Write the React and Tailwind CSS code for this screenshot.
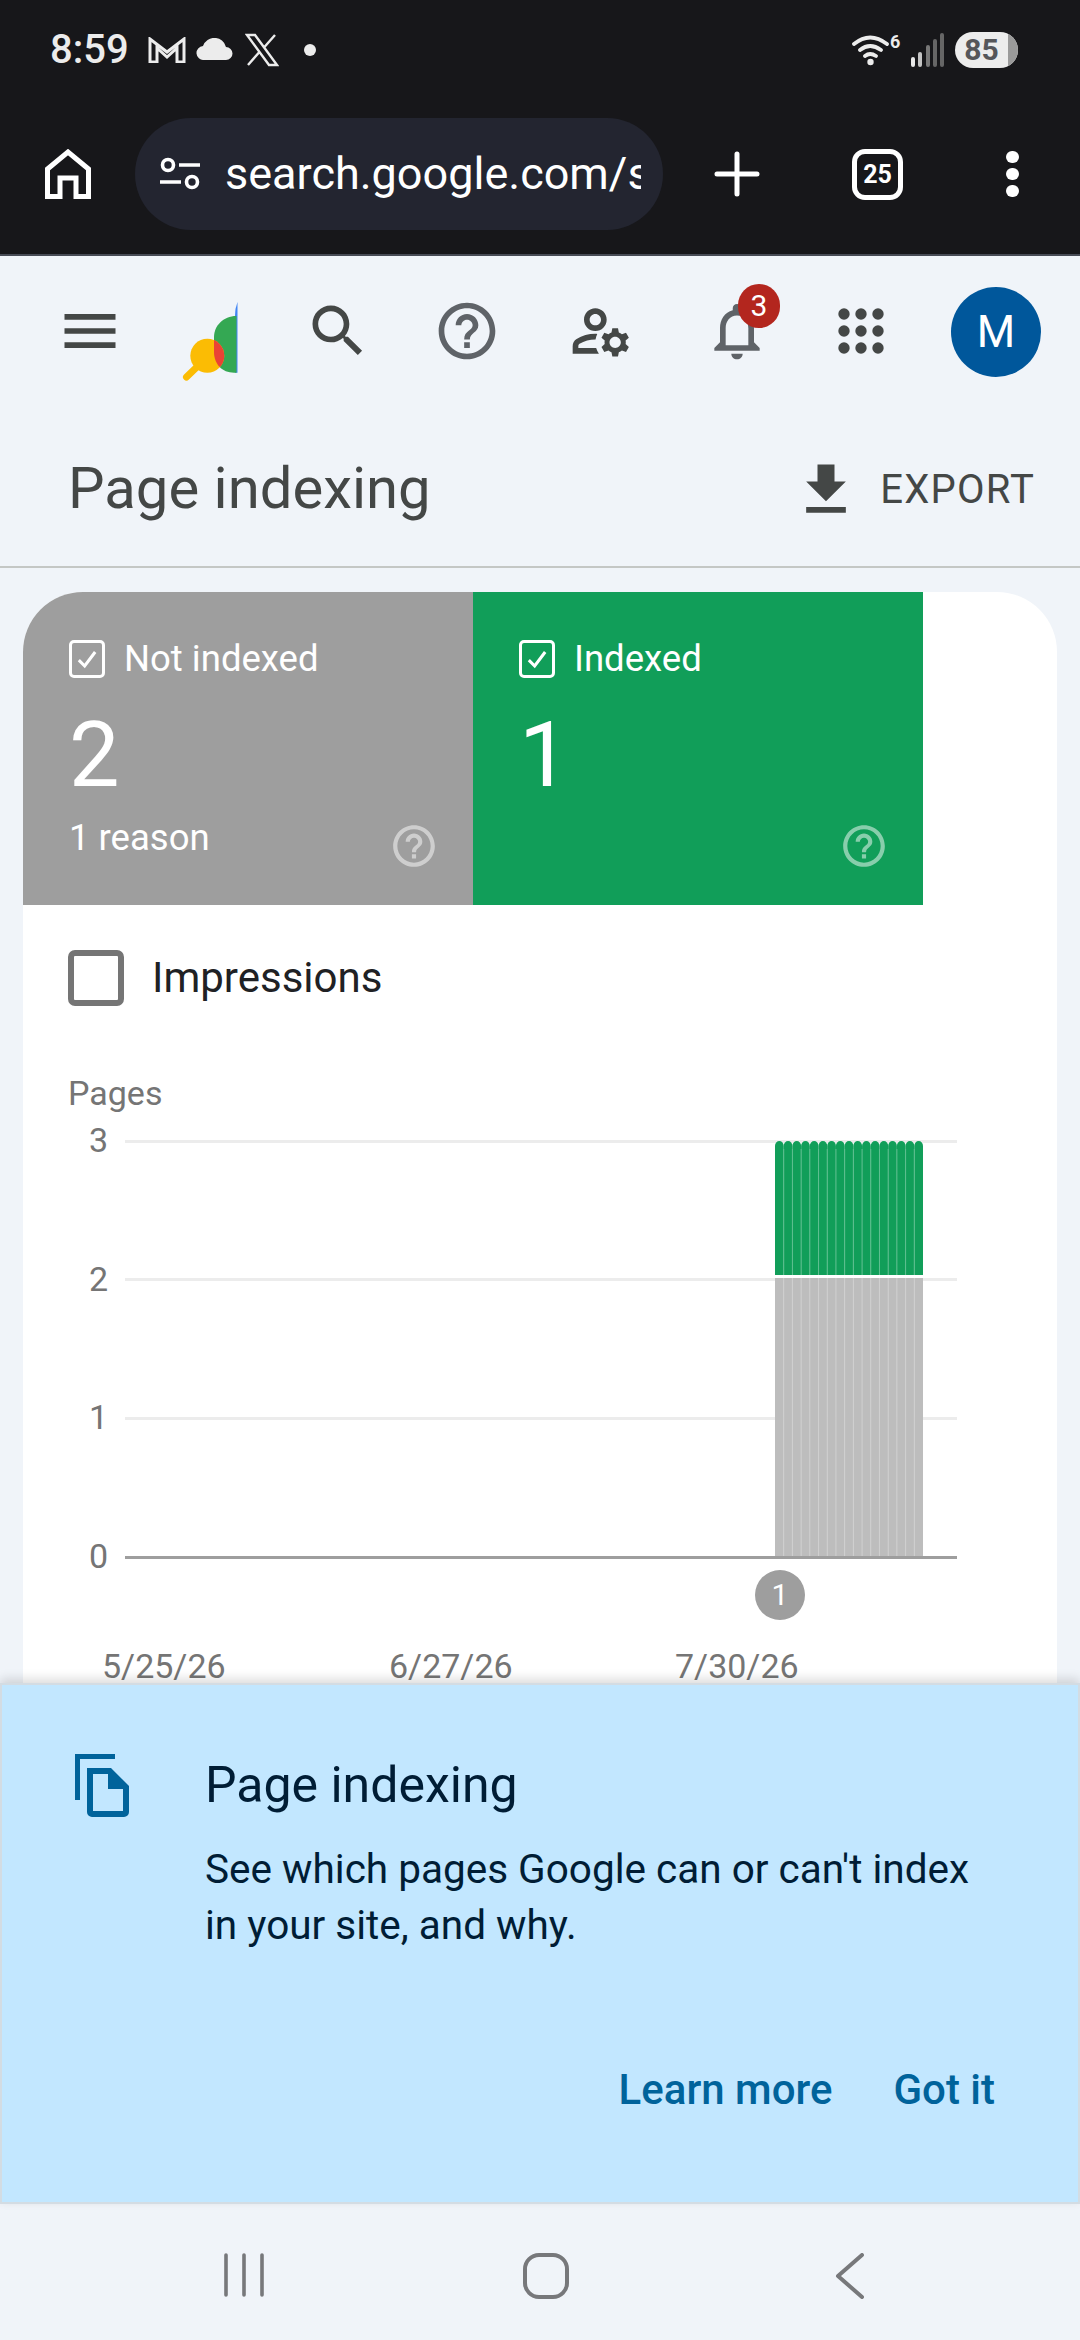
import React from "react";

const paths = {
  menu: "M3 18h18v-2H3v2zm0-5h18v-2H3v2zm0-7v2h18V6H3z",
  search:
    "M15.5 14h-.79l-.28-.27C15.41 12.59 16 11.11 16 9.5 16 5.91 13.09 3 9.5 3S3 5.91 3 9.5 5.91 16 9.5 16c1.61 0 3.09-.59 4.23-1.57l.27.28v.79l5 4.99L20.49 19l-4.99-5zm-6 0C7.01 14 5 11.99 5 9.5S7.01 5 9.5 5 14 7.01 14 9.5 11.99 14 9.5 14z",
  help: "M11 18h2v-2h-2v2zm1-16C6.48 2 2 6.48 2 12s4.48 10 10 10 10-4.48 10-10S17.52 2 12 2zm0 18c-4.41 0-8-3.59-8-8s3.59-8 8-8 8 3.59 8 8-3.59 8-8 8zm0-14c-2.21 0-4 1.79-4 4h2c0-1.1.9-2 2-2s2 .9 2 2c0 2-3 1.75-3 5h2c0-2.25 3-2.5 3-5 0-2.21-1.79-4-4-4z",
  accounts:
    "M4 18v-.65c0-.34.16-.66.41-.81C6.1 15.53 8.03 15 10 15c.03 0 .05 0 .08.01.1-.7.3-1.37.59-1.98-.22-.02-.44-.03-.67-.03-2.42 0-4.68.67-6.61 1.82-.88.52-1.39 1.5-1.39 2.53V20h9.26c-.42-.6-.75-1.28-.97-2H4zM10 12c2.21 0 4-1.79 4-4s-1.79-4-4-4-4 1.79-4 4 1.79 4 4 4zm0-6c1.1 0 2 .9 2 2s-.9 2-2 2-2-.9-2-2 .9-2 2-2zM20.75 16c0-.22-.03-.42-.06-.63l1.14-1.01-1-1.73-1.45.49c-.32-.27-.68-.48-1.08-.63L18 11h-2l-.3 1.49c-.4.15-.76.36-1.08.63l-1.45-.49-1 1.73 1.14 1.01c-.03.21-.06.41-.06.63s.03.42.06.63l-1.14 1.01 1 1.73 1.45-.49c.32.27.68.48 1.08.63L16 21h2l.3-1.49c.4-.15.76-.36 1.08-.63l1.45.49 1-1.73-1.14-1.01c.03-.21.06-.41.06-.63zM17 18c-1.1 0-2-.9-2-2s.9-2 2-2 2 .9 2 2-.9 2-2 2z",
  bell: "M12 22c1.1 0 2-.9 2-2h-4c0 1.1.89 2 2 2zm6-6v-5c0-3.07-1.64-5.64-4.5-6.32V4c0-.83-.67-1.5-1.5-1.5s-1.5.67-1.5 1.5v.68C7.63 5.36 6 7.92 6 11v5l-2 2v1h16v-1l-2-2zm-2 1H8v-6c0-2.48 1.51-4.5 4-4.5s4 2.02 4 4.5v6z",
  download: "M19 9h-4V3H9v6H5l7 7 7-7zM5 18v2h14v-2H5z",
};

function Icon({ name, className }) {
  return (
    <svg viewBox="0 0 24 24" className={className} fill="currentColor">
      <path d={paths[name]} />
    </svg>
  );
}

function AppsIcon({ className }) {
  const spots = [6, 12, 18];
  return (
    <svg viewBox="0 0 24 24" className={className} fill="currentColor">
      {spots.map((y) =>
        spots.map((x) => <circle key={`${x}-${y}`} cx={x} cy={y} r="2" />)
      )}
    </svg>
  );
}

const greenShape = "M56.5 16 V72.7 H54 C42 72.7 34 64 34 52 V37 C34 26 43 16 56.5 16 Z";

function Logo() {
  return (
    <svg viewBox="0 0 60 84" className="ml-[56px] w-[60px] h-[84px] mt-[11px] shrink-0">
      <defs>
        <clipPath id="logo-green">
          <path d={greenShape} />
        </clipPath>
      </defs>
      <path d="M57.5 2 Q55 8 55 16 V72.7 H57.5 Z" fill="#4285f4" />
      <path d={greenShape} fill="#34a853" />
      <path d="M6.5 77 L20 64" stroke="#fbbc04" strokeWidth="7" strokeLinecap="round" />
      <circle cx="27.3" cy="55.7" r="17" fill="#fbbc04" />
      <circle cx="27.3" cy="55.7" r="17" fill="#ea4335" clipPath="url(#logo-green)" />
    </svg>
  );
}

function StatusBar() {
  return (
    <div className="h-[100px] flex items-center justify-between pl-[50px] pr-[62px] text-[#ececec]">
      <div className="flex items-center">
        <span className="text-[40px] leading-none font-medium w-[98px]">8:59</span>
        <svg viewBox="0 0 38 26" className="w-[38px] h-[26px]" fill="none" stroke="currentColor" strokeWidth="3">
          <path d="M2 25 V2 L19 15 L36 2 V25 H29 V11 L19 20 L9 11 V25 Z" />
        </svg>
        <svg viewBox="0 0 38 22" className="w-[38px] h-[22px] ml-[10px] -mt-[2px]" fill="currentColor">
          <path d="M8 22 a7 7 0 0 1-1-14 a12 12 0 0 1 23 1 a6.5 6.5 0 0 1 0 13 Z" />
        </svg>
        <svg viewBox="0 0 34 34" className="w-[34px] h-[34px] ml-[11px]" fill="none" stroke="currentColor" strokeWidth="2.4">
          <path d="M2 2 H10 L32 32 H24 Z M30 2 L19 14.5 M14 19.5 L3 32" />
        </svg>
        <div className="w-[12px] h-[12px] rounded-full bg-[#ececec] ml-[25px]" />
      </div>
      <div className="flex items-center">
        <svg viewBox="0 0 50 32" className="w-[50px] h-[32px]" fill="none" stroke="currentColor" strokeLinecap="round">
          <path d="M2 10 Q18 -3 35 10 M8 16 Q18 8 29 16 M13 22 Q18 18 24 22" strokeWidth="3.8" />
          <circle cx="18.5" cy="28" r="3.2" fill="currentColor" stroke="none" />
          <text x="38" y="14" fontSize="18" fontWeight="700" fill="currentColor" stroke="none" fontFamily="Roboto, sans-serif">6</text>
        </svg>
        <svg viewBox="0 0 34 34" className="w-[34px] h-[34px] ml-[9px]" fill="none" strokeWidth="4" strokeLinecap="round">
          <path d="M2 32 V26" stroke="#e8e8e8" />
          <path d="M9 32 V21" stroke="#c4c4c4" />
          <path d="M17 32 V14" stroke="#777" />
          <path d="M24 32 V8" stroke="#666" />
          <path d="M31 32 V2" stroke="#666" />
        </svg>
        <div className="ml-[10px] w-[63px] h-[36px] rounded-full overflow-hidden bg-[#ececec] flex">
          <div className="w-[53px] flex items-center justify-center text-[#55565a] text-[30px] leading-none font-bold">
            85
          </div>
          <div className="w-[10px] bg-[#9a9a9a]" />
        </div>
      </div>
    </div>
  );
}

function BrowserBar() {
  return (
    <div className="mt-[18px] h-[112px] flex items-center text-white">
      <svg viewBox="0 0 46 50" className="ml-[45px] w-[46px] h-[50px]" fill="none" stroke="currentColor" strokeWidth="5">
        <path d="M2.5 47.5 V20 L23 3 L43.5 20 V47.5 H31 V29 H15 V47.5 Z" />
      </svg>
      <div className="ml-[44px] w-[528px] h-[112px] rounded-[56px] bg-[#232530] flex items-center pl-[24px]">
        <svg viewBox="0 0 42 34" className="w-[42px] h-[34px] shrink-0" fill="none" stroke="currentColor" strokeWidth="3.6">
          <circle cx="9" cy="8" r="5.5" />
          <path d="M20 8 H41 M1 25 H22" />
          <circle cx="33" cy="25" r="5.5" />
        </svg>
        <div className="ml-[24px] w-[416px] overflow-hidden whitespace-nowrap text-[45px] leading-[60px]">
          search.google.com/search
        </div>
      </div>
      <svg viewBox="0 0 46 46" className="ml-[51px] w-[46px] h-[46px]" stroke="currentColor" strokeWidth="5" strokeLinecap="round">
        <path d="M23 3 V43 M3 23 H43" />
      </svg>
      <div className="ml-[92px] w-[51px] h-[51px] border-[5px] border-white rounded-[13px] flex items-center justify-center text-[25px] leading-none font-bold">
        25
      </div>
      <div className="ml-[103px] flex flex-col gap-[5px]">
        <div className="w-[13px] h-[12px] rounded-full bg-white" />
        <div className="w-[13px] h-[12px] rounded-full bg-white" />
        <div className="w-[13px] h-[12px] rounded-full bg-white" />
      </div>
    </div>
  );
}

function Toolbar() {
  return (
    <div className="h-[120px] shrink-0 pt-[9px] flex items-start pl-[56px] text-[#444746]">
      <Icon name="menu" className="w-[68px] h-[68px] mt-[8px] shrink-0" />
      <Logo />
      <Icon name="search" className="ml-[64px] w-[68px] h-[68px] mt-[8px] shrink-0" />
      <Icon name="help" className="ml-[61px] w-[68px] h-[68px] mt-[8px] shrink-0 text-[#5f6368]" />
      <Icon name="accounts" className="ml-[66px] w-[68px] h-[68px] mt-[8px] shrink-0" />
      <div className="relative ml-[68px] w-[68px] h-[68px] mt-[8px] shrink-0 text-[#5f6368]">
        <Icon name="bell" className="w-[68px] h-[68px]" />
        <div className="absolute -top-[13px] left-[35px] w-[42px] h-[44px] rounded-full bg-[#b3261e] text-white text-[30px] leading-[44px] text-center">
          3
        </div>
      </div>
      <AppsIcon className="ml-[56px] w-[68px] h-[68px] mt-[8px] shrink-0" />
      <div className="ml-[56px] w-[90px] h-[90px] -mt-[2px] rounded-full bg-[#00579b] text-white text-[44px] leading-[90px] text-center shrink-0">
        M
      </div>
    </div>
  );
}

function TitleRow() {
  return (
    <div className="h-[168px] shrink-0 border-b-[2px] border-[#c4c7c5] flex items-center justify-between pl-[68px] pr-[45px] pt-[10px] text-[#444746]">
      <div className="text-[58px] leading-[70px]">Page indexing</div>
      <div className="flex items-center mt-[3px]">
        <Icon name="download" className="w-[68px] h-[68px]" />
        <div className="ml-[20px] text-[40px] leading-[50px] tracking-[1.2px]">EXPORT</div>
      </div>
    </div>
  );
}

function Tile({ label, value, note, bg }) {
  return (
    <div className={`w-[450px] h-[313px] ${bg} text-white pl-[46px] pr-[34px] pt-[47px]`}>
      <div className="flex items-center h-[40px]">
        <div className="w-[36px] h-[38px] border-[3px] border-white rounded-[5px] flex items-center justify-center">
          <svg viewBox="0 0 24 24" className="w-[28px] h-[28px]" fill="none" stroke="currentColor" strokeWidth="2.6">
            <path d="M5 13 L10 18 L19 6" />
          </svg>
        </div>
        <div className="ml-[19px] text-[36.5px] leading-[40px]">{label}</div>
      </div>
      <div className="mt-[32px] text-[90px] leading-[90px]">{value}</div>
      <div className="mt-[20px] flex items-start justify-between">
        <div className="text-[36.5px] leading-[34px]">{note}</div>
        <Icon name="help" className="w-[50px] h-[50px] opacity-50" />
      </div>
    </div>
  );
}

function Chart() {
  const lines = [11, 149, 288];
  const bars = Array.from({ length: 17 }, (_, i) => i);
  const barW = 148 / 17;
  return (
    <div className="flex items-start mt-[8px] ml-[60px]">
      <div className="w-[25px] h-[454px] flex flex-col justify-between text-right text-[34px] leading-[38px] text-[#757575]">
        <div>3</div>
        <div>2</div>
        <div>1</div>
        <div>0</div>
      </div>
      <svg viewBox="0 0 832 430" className="w-[832px] h-[430px] mt-[8px] ml-[17px] shrink-0">
        {lines.map((y) => (
          <rect key={y} x="0" y={y} width="832" height="3" fill="#ececec" />
        ))}
        {bars.map((i) => {
          const x = 650 + i * barW;
          return (
            <g key={i}>
              <rect x={x} y="149" width={barW} height="279" fill="#bdbdbd" />
              <path
                d={`M${x} 146 V17 A${barW / 2} 5 0 0 1 ${x + barW} 17 V146 Z`}
                fill="#119e59"
              />
              {i > 0 && <rect x={x - 0.5} y="20" width="1" height="126" fill="#5fbf90" />}
              {i > 0 && <rect x={x - 0.5} y="149" width="1" height="279" fill="#cfcfcf" />}
            </g>
          );
        })}
        <rect x="0" y="427" width="832" height="3" fill="#9e9e9e" />
      </svg>
    </div>
  );
}

function Card() {
  return (
    <div className="mt-[24px] mx-[23px] flex-1 min-h-0 overflow-hidden bg-white rounded-t-[60px]">
      <div className="flex">
        <Tile label="Not indexed" value="2" note="1 reason" bg="bg-[#9e9e9e]" />
        <Tile label="Indexed" value="1" note="" bg="bg-[#119e59]" />
      </div>
      <div className="mt-[45px] ml-[45px] flex items-center">
        <div className="w-[56px] h-[56px] border-[6px] border-[#757575] rounded-[7px]" />
        <div className="ml-[28px] text-[42px] leading-[56px] text-[#202124]">Impressions</div>
      </div>
      <div className="mt-[67px] ml-[45px] text-[34px] leading-[40px] text-[#757575]">Pages</div>
      <Chart />
      <div className="ml-[732px] -mt-[5px] w-[50px] h-[50px] rounded-full bg-[#9e9e9e] text-white text-[30px] leading-[50px] text-center">
        1
      </div>
      <div className="mt-[26px] ml-[79px] flex text-[34px] leading-[40px] text-[#757575]">
        <div className="w-[287px]">5/25/26</div>
        <div className="w-[286px]">6/27/26</div>
        <div>7/30/26</div>
      </div>
    </div>
  );
}

function Banner() {
  return (
    <div className="relative h-[521px] shrink-0 bg-[#c2e7ff] border-2 border-[#d3dce3] shadow-[0_-4px_10px_rgba(0,0,0,0.14)] pt-[69px] pl-[73px]">
      <div className="flex items-start">
        <svg viewBox="0 0 54 64" className="w-[54px] h-[64px] shrink-0 text-[#00639b]" fill="currentColor">
          <path d="M0 0 H40 V5 H5 V46 H0 Z" />
          <path d="M12 14 H36 L54 32 V58 a5 5 0 0 1-5 5 H17 a5 5 0 0 1-5-5 Z M18 20 V57 H48 V35 H33 V20 Z" fillRule="evenodd" />
        </svg>
        <div className="ml-[76px] text-[#001d35]">
          <div className="text-[50px] leading-[60px] mt-[1px]">Page indexing</div>
          <div className="mt-[26px] text-[40.5px] leading-[56px]">
            See which pages Google can or can't index
            <br />
            in your site, and why.
          </div>
        </div>
      </div>
      <div className="mt-[112px] mr-[83px] flex justify-end text-[42px] leading-[50px] font-medium text-[#00639b]">
        <div>Learn more</div>
        <div className="ml-[61px]">Got it</div>
      </div>
    </div>
  );
}

function NavBar() {
  return (
    <div className="h-[136px] shrink-0 bg-[#f0f4f9] pt-[49px] flex items-start text-[#77787b]">
      <svg viewBox="0 0 40 44" className="ml-[224px] w-[40px] h-[44px]" stroke="currentColor" strokeWidth="3.6" strokeLinecap="round">
        <path d="M2 2 V42 M20 2 V42 M38 2 V42" />
      </svg>
      <svg viewBox="0 0 46 46" className="ml-[259px] w-[46px] h-[46px]" fill="none" stroke="currentColor" strokeWidth="4">
        <rect x="2" y="2" width="42" height="42" rx="14" />
      </svg>
      <svg viewBox="0 0 30 46" className="ml-[266px] w-[30px] h-[46px]" fill="none" stroke="currentColor" strokeWidth="4" strokeLinecap="round" strokeLinejoin="round">
        <path d="M27 2 L3 23 L27 44" />
      </svg>
    </div>
  );
}

export default function App() {
  return (
    <div className="w-[1080px] h-[2340px] overflow-hidden bg-[#f0f4f9] flex flex-col font-['Roboto',sans-serif]">
      <div className="h-[256px] shrink-0 bg-[#17171a] border-b-[2px] border-[#474b55]">
        <StatusBar />
        <BrowserBar />
      </div>
      <div className="h-[312px] shrink-0 flex flex-col pt-[24px]">
        <Toolbar />
        <TitleRow />
      </div>
      <Card />
      <Banner />
      <NavBar />
    </div>
  );
}
